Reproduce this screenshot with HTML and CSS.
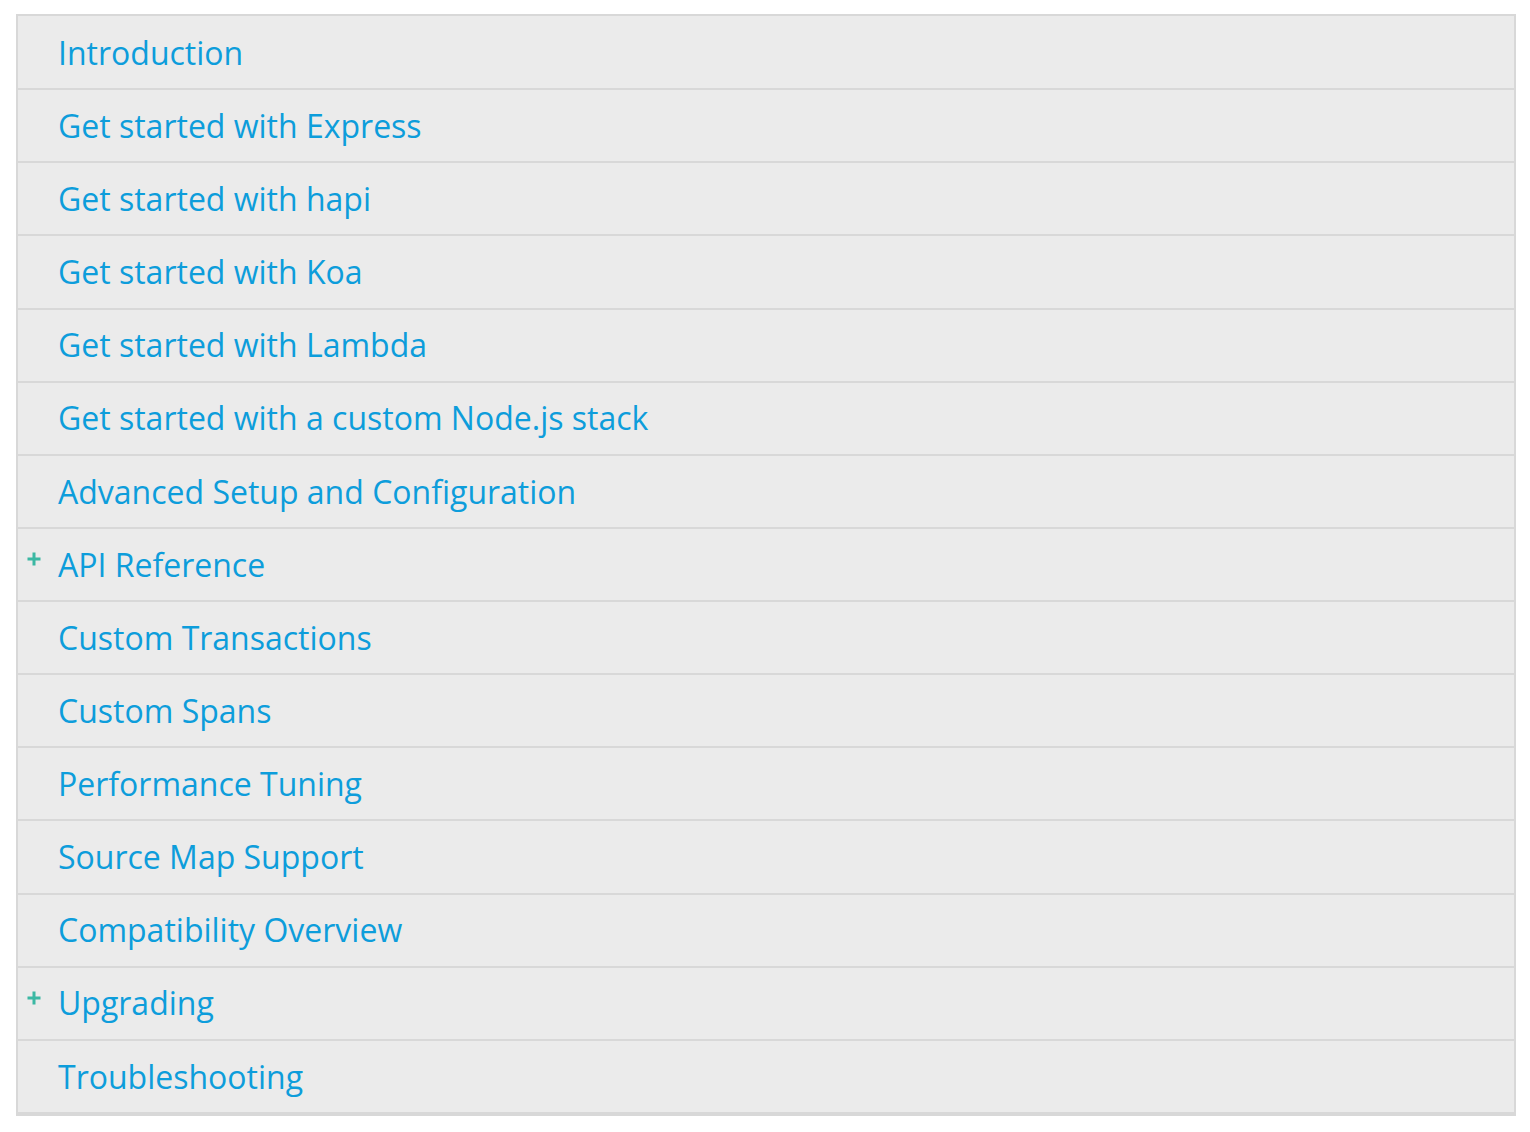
FILE: index.html
```html
<!DOCTYPE html>
<html>
<head>
<meta charset="utf-8">
<link rel="stylesheet" href="styles.css">
</head>
<body>
<ul class="toc">
  <li class="item"><a href="#">Introduction</a></li>
  <li class="item"><a href="#">Get started with Express</a></li>
  <li class="item"><a href="#">Get started with hapi</a></li>
  <li class="item"><a href="#">Get started with Koa</a></li>
  <li class="item"><a href="#">Get started with Lambda</a></li>
  <li class="item"><a href="#">Get started with a custom Node.js stack</a></li>
  <li class="item"><a href="#">Advanced Setup and Configuration</a></li>
  <li class="item collapsible"><span class="plus"><svg width="16" height="16" viewBox="0 0 16 16"><path d="M8 1.5v13M1.5 8h13" stroke="#3bb8a3" stroke-width="3" fill="none"/></svg></span><a href="#">API Reference</a></li>
  <li class="item"><a href="#">Custom Transactions</a></li>
  <li class="item"><a href="#">Custom Spans</a></li>
  <li class="item"><a href="#">Performance Tuning</a></li>
  <li class="item"><a href="#">Source Map Support</a></li>
  <li class="item"><a href="#">Compatibility Overview</a></li>
  <li class="item collapsible"><span class="plus"><svg width="16" height="16" viewBox="0 0 16 16"><path d="M8 1.5v13M1.5 8h13" stroke="#3bb8a3" stroke-width="3" fill="none"/></svg></span><a href="#">Upgrading</a></li>
  <li class="item"><a href="#">Troubleshooting</a></li>
</ul>
</body>
</html>
```
FILE: styles.css
```css
html, body {
  margin: 0;
  padding: 0;
  background: #ffffff;
}
body {
  padding: 14px 14px 0 16px;
  font-family: "Open Sans", "Liberation Sans", sans-serif;
}
.toc {
  list-style: none;
  margin: 0;
  padding: 1px 0 0 0;
  width: 1496px;
  border: 2px solid #d8d8d8;
  background: #ebebeb;
}
.item {
  position: relative;
  display: flex;
  align-items: center;
  height: 71.14px;
  padding-left: 40px;
  border-bottom: 2px solid #d8d8d8;
  font-size: 32px;
  line-height: 43.6px;
}
.item a {
  color: #0d9ddb;
  text-decoration: none;
}
.plus {
  position: absolute;
  left: 8px;
  top: 22px;
  width: 16px;
  height: 16px;
  display: block;
}
.plus svg {
  display: block;
}
```
